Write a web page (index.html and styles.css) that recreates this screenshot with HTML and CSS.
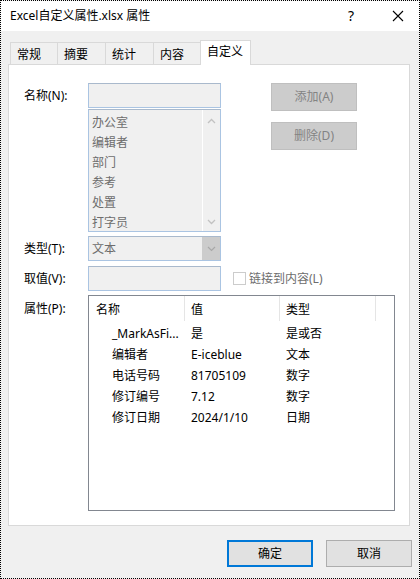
FILE: index.html
```html
<!DOCTYPE html>
<html lang="zh-CN">
<head>
<meta charset="utf-8">
<link rel="stylesheet" href="styles.css">
</head>
<body>
<div class="window">
  <div class="titlebar">
    <span class="title">Excel自定义属性.xlsx 属性</span>
    <span class="help">?</span>
    <svg class="close" width="12" height="12" viewBox="0 0 12 12"><path d="M1 1 L11 11 M11 1 L1 11" stroke="#000" stroke-width="1.1" fill="none"/></svg>
  </div>
  <div class="tabs">
    <div class="tab w47">常规</div>
    <div class="tab w48">摘要</div>
    <div class="tab w48">统计</div>
    <div class="tab w47">内容</div>
    <div class="tab active">自定义</div>
  </div>
  <div class="panel">
    <div class="form">
      <div class="lbl">名称(N):</div>
      <div class="field"></div>
      <div class="side-buttons">
        <div class="gbtn">添加(A)</div>
        <div class="gbtn">删除(D)</div>
      </div>

      <div class="listbox">
        <div class="items">
          <div>办公室</div>
          <div>编辑者</div>
          <div>部门</div>
          <div>参考</div>
          <div>处置</div>
          <div>打字员</div>
        </div>
        <div class="scroll">
          <svg width="9" height="6" viewBox="0 0 9 6"><path d="M1 5 L4.5 1.5 L8 5" stroke="#c2c2c2" stroke-width="1.3" fill="none"/></svg>
          <svg width="9" height="6" viewBox="0 0 9 6"><path d="M1 1 L4.5 4.5 L8 1" stroke="#c2c2c2" stroke-width="1.3" fill="none"/></svg>
        </div>
      </div>

      <div class="lbl row3">类型(T):</div>
      <div class="field combo row3">
        <span class="ctext">文本</span>
        <span class="dd"><svg width="9" height="6" viewBox="0 0 9 6"><path d="M1 1 L4.5 4.5 L8 1" stroke="#a8a8a8" stroke-width="1.2" fill="none"/></svg></span>
      </div>

      <div class="lbl row4">取值(V):</div>
      <div class="field row4"></div>
      <div class="check row4"><span class="box"></span><span>链接到内容(L)</span></div>

      <div class="lbl row5">属性(P):</div>
      <div class="proplist row5">
        <div class="prow head">
          <div class="c c1">名称</div>
          <div class="c c2">值</div>
          <div class="c c3">类型</div>
        </div>
        <div class="prow">
          <div class="c c1 ind">_MarkAsFi...</div>
          <div class="c c2">是</div>
          <div class="c c3">是或否</div>
        </div>
        <div class="prow">
          <div class="c c1 ind">编辑者</div>
          <div class="c c2">E-iceblue</div>
          <div class="c c3">文本</div>
        </div>
        <div class="prow">
          <div class="c c1 ind">电话号码</div>
          <div class="c c2">81705109</div>
          <div class="c c3">数字</div>
        </div>
        <div class="prow">
          <div class="c c1 ind">修订编号</div>
          <div class="c c2">7.12</div>
          <div class="c c3">数字</div>
        </div>
        <div class="prow">
          <div class="c c1 ind">修订日期</div>
          <div class="c c2">2024/1/10</div>
          <div class="c c3">日期</div>
        </div>
      </div>
    </div>
  </div>
  <div class="footer">
    <div class="fbtn ok">确定</div>
    <div class="fbtn">取消</div>
  </div>
</div>
</body>
</html>
```

FILE: styles.css
```css
* { box-sizing: border-box; }
html, body { margin: 0; padding: 0; }
body {
  font-family: "Noto Sans", "Noto Sans CJK SC", sans-serif;
  font-size: 12px;
  line-height: 16px;
  color: #000;
  background: #fff;
}
.window {
  width: 420px;
  height: 579px;
  border: 1px dotted #000;
  background: #f0f0f0;
  display: flex;
  flex-direction: column;
}
.titlebar {
  height: 30px;
  background: #fff;
  display: flex;
  align-items: center;
  padding-left: 9px;
  flex-shrink: 0;
}
.title { flex: 1; font-size: 12px; }
.help { font-size: 14px; margin-right: 38px; }
.close { margin-right: 15px; }
.tabs {
  display: flex;
  align-items: flex-end;
  margin-top: 9px;
  padding-left: 9px;
  height: 24px;
  flex-shrink: 0;
}
.tab {
  height: 22px;
  border: 1px solid #d9d9d9;
  border-bottom: none;
  margin-right: -1px;
  padding-left: 6px;
  padding-top: 1px;
  line-height: 21px;
  background: #f0f0f0;
}
.w47 { width: 48px; }
.w48 { width: 49px; }
.tab.active {
  height: 25px;
  width: 51px;
  margin-bottom: -1px;
  background: #fff;
  line-height: 20px;
  position: relative;
  z-index: 1;
}
.panel {
  margin: 0 9px 0 7px;
  height: 462px;
  border: 1px solid #d9d9d9;
  background: #fff;
  padding: 18px 0 0 15px;
  flex-shrink: 0;
}
.form {
  display: grid;
  grid-template-columns: 64px 133px 1fr;
  align-items: center;
}
.lbl { grid-column: 1; padding-top: 1px; }
.field {
  grid-column: 2;
  height: 25px;
  border: 1px solid #aac4e2;
  border-top-color: #a9b9cc;
  background: #f0f0f0;
}
.side-buttons {
  grid-column: 3;
  grid-row: 1 / span 2;
  align-self: start;
  display: flex;
  flex-direction: column;
  gap: 11px;
  padding-left: 50px;
}
.gbtn {
  width: 86px;
  height: 28px;
  background: #cccccc;
  border: 1px solid #bfbfbf;
  color: #838383;
  text-align: center;
  line-height: 26px;
}
.listbox {
  grid-column: 2;
  grid-row: 2;
  margin-top: 1px;
  height: 123px;
  border: 1px solid #aac4e2;
  border-top-color: #a9b9cc;
  background: #f0f0f0;
  display: flex;
}
.items {
  flex: 1;
  color: #6d6d6d;
  padding: 3px 0 0 3px;
}
.items div { height: 20px; line-height: 20px; }
.scroll {
  width: 18px;
  border-left: 1px solid #fff;
  display: flex;
  flex-direction: column;
  justify-content: space-between;
  align-items: center;
  padding: 8px 0 6px;
}
.row3 { grid-row: 3; margin-top: 4px; }
.row4 { grid-row: 4; margin-top: 5px; }
.row5 { grid-row: 5; margin-top: 4px; }
.combo {
  display: flex;
  align-items: stretch;
  color: #6d6d6d;
}
.ctext { flex: 1; padding-left: 3px; line-height: 23px; }
.dd {
  width: 18px;
  background: #cccccc;
  display: flex;
  align-items: center;
  justify-content: center;
}
.check {
  grid-column: 3;
  display: flex;
  align-items: center;
  color: #6d6d6d;
  padding-left: 12px;
}
.box {
  width: 13px;
  height: 13px;
  border: 1px solid #cccccc;
  background: #fff;
  margin-right: 3px;
}
.lbl.row5 { align-self: start; padding-top: 6px; }
.proplist {
  grid-column: 2 / 4;
  justify-self: start;
  width: 307px;
  height: 216px;
  border: 1px solid #828790;
}
.prow { display: flex; height: 21px; line-height: 21px; }
.prow .c { padding-top: 2px; }
.prow.head { height: 25px; line-height: 24px; }
.c { white-space: nowrap; overflow: hidden; }
.c1 { width: 96px; padding-left: 7px; }
.c2 { width: 95px; padding-left: 6px; }
.c3 { width: 96px; padding-left: 6px; }
.head .c { border-right: 1px solid #e5e5e5; }
.c1.ind { padding-left: 23px; }
.footer {
  display: flex;
  justify-content: flex-end;
  gap: 13px;
  padding: 14px 7px 0 0;
}
.fbtn {
  width: 86px;
  height: 27px;
  background: #e1e1e1;
  border: 1px solid #adadad;
  text-align: center;
  line-height: 26px;
}
.fbtn.ok {
  border: 2px solid #0078d7;
  line-height: 24px;
}
```
